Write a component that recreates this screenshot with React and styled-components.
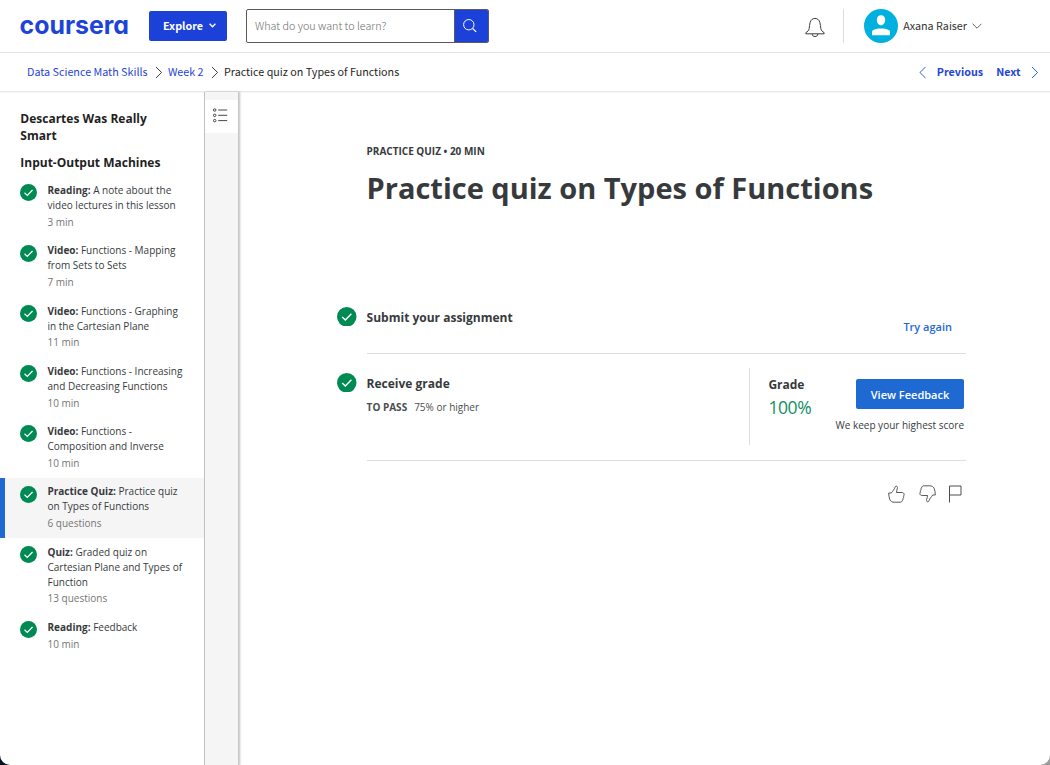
import React from "react";
import styled, { createGlobalStyle, css } from "styled-components";

const GlobalStyle = createGlobalStyle`
  * { box-sizing: border-box; }
  body {
    margin: 0;
    background: linear-gradient(90deg, #07111f 50%, #9b9b9b 50%);
    font-family: "Open Sans", sans-serif;
    color: #373a3c;
  }
`;

const sourceFont = css`
  font-family: "Noto Sans CJK SC", "Noto Sans", sans-serif;
`;

const Page = styled.div`
  height: 765px;
  display: flex;
  flex-direction: column;
  background: #fff;
  border-radius: 0 0 10px 10px;
  overflow: hidden;
`;

/* ---------- top bar ---------- */

const TopBar = styled.header`
  ${sourceFont}
  flex: none;
  height: 53px;
  display: flex;
  align-items: center;
  padding: 0 68px 0 20px;
  border-bottom: 1px solid #e3e3e3;
`;

const Logo = styled.svg`
  display: block;
  width: 109px;
  height: 30px;
  margin-right: 20px;
  overflow: visible;

  text {
    font: 700 25.5px Inter, sans-serif;
    font-feature-settings: "cv11";
    fill: #1d43d8;
  }
`;

const ExploreButton = styled.button`
  ${sourceFont}
  width: 78px;
  height: 30px;
  margin-right: 19px;
  padding: 0 0 1px 14px;
  display: flex;
  align-items: center;
  gap: 6px;
  border: 0;
  border-radius: 2px;
  background: #1b41d8;
  color: #fff;
  font-size: 10.75px;
  font-weight: 700;
`;

const SearchBox = styled.div`
  width: 243px;
  height: 34px;
  display: flex;
  border: 1px solid #5a5a5a;
  border-radius: 2px;
  overflow: hidden;
`;

const SearchField = styled.div`
  flex: 1;
  padding-left: 8px;
  line-height: 32px;
  font-size: 10.75px;
  font-weight: 300;
  color: #6c6c6c;
`;

const SearchButton = styled.button`
  width: 34px;
  padding: 0 1px 0 0;
  display: flex;
  align-items: center;
  justify-content: center;
  border: 0;
  border-left: 1px solid #5a5a5a;
  background: #1b41d8;
`;

const Account = styled.div`
  margin-left: auto;
  display: flex;
  align-items: center;
`;

const Divider = styled.span`
  width: 1px;
  height: 34px;
  margin: 0 20px 0 18px;
  background: #dcdcdc;
`;

const UserName = styled.span`
  margin: 0 5px;
  padding-bottom: 2px;
  font-size: 10.75px;
  color: #333;
`;

/* ---------- breadcrumbs ---------- */

const CrumbBar = styled.nav`
  ${sourceFont}
  flex: none;
  height: 39px;
  display: flex;
  align-items: center;
  padding: 0 12px 0 27px;
  border-bottom: 1px solid #e8e8e8;
  box-shadow: 0 1px 0 #f6f6f6;
  font-size: 10.75px;
  color: #1f1f1f;
`;

const Crumb = styled.span`
  padding-bottom: 2px;
`;

const CrumbLink = styled(Crumb)`
  color: #1f45d6;
`;

const CrumbArrow = styled.span`
  display: flex;
  margin: 0 5.7px 0 7.2px;
`;

const Pager = styled.div`
  margin-left: auto;
  display: flex;
  align-items: center;
  gap: 10px;
  color: #1f45d6;
  font-weight: 700;
`;

const PagerLabel = styled.a`
  padding-bottom: 2px;

  & + & {
    margin-left: 3px;
  }
`;

/* ---------- body ---------- */

const Body = styled.div`
  flex: 1;
  min-height: 0;
  display: flex;
`;

const Sidebar = styled.aside`
  width: 205px;
  padding-top: 18px;
  border-right: 1px solid #c4c4c4;
`;

const LessonTitle = styled.h3`
  margin: 0 40px 10px 20.3px;
  font-size: 12px;
  line-height: 17px;
  font-weight: 700;
  color: #1f1f1f;
`;

const ItemList = styled.ul`
  list-style: none;
  margin: -4px 0 0;
  padding: 0;
`;

const Item = styled.li`
  display: flex;
  padding: 6.15px 18px 7.35px ${(p) => (p.$active ? 15 : 20)}px;
  border-left: ${(p) => (p.$active ? "5px solid #1f6ad2" : "0")};
  background: ${(p) => (p.$active ? "#f5f5f5" : "transparent")};
`;

const ItemText = styled.div`
  margin-left: 10.5px;
  font-size: 10px;
  line-height: 15px;
  color: #373a3c;
`;

const ItemMeta = styled.div`
  margin-top: 1.75px;
  color: #757575;
`;

const ItemCheck = styled.span`
  flex: none;
  height: 17px;
  margin-top: 1.35px;
`;

const Rail = styled.div`
  width: 34px;
  padding-top: 8px;
  background: #f5f5f5;
  border-right: 1px solid #c8c8c8;
  box-shadow: 1px 0 2px rgba(0, 0, 0, 0.25);
`;

const RailTab = styled.div`
  height: 33px;
  display: flex;
  align-items: center;
  padding: 0 0 2px 8px;
  background: #fff;
`;

const Content = styled.main`
  width: 629px;
  margin-left: 98px;
  padding-top: 52px;
`;

const Indented = styled.div`
  margin-left: 29.5px;
`;

const Eyebrow = styled.div`
  font-size: 10px;
  line-height: 15px;
  font-weight: 700;
`;

const Title = styled.h1`
  margin: 9px 0 0;
  font-size: 29px;
  line-height: 40px;
  font-weight: 700;
`;

const Step = styled.section`
  display: flex;
  height: ${(p) => p.$height}px;
  margin-top: ${(p) => p.$top || 0}px;
`;

const StepCheck = styled.div`
  flex: none;
  width: 29.6px;
  padding-top: ${(p) => p.$top}px;
`;

const StepBody = styled.div`
  flex: 1;
  display: flex;
  justify-content: space-between;
  border-bottom: 1px solid #dedede;
`;

const StepInfo = styled.div`
  padding-top: ${(p) => p.$top}px;
`;

const Label = styled.div`
  font-size: 12px;
  line-height: 18px;
  font-weight: 700;
`;

const PassLine = styled.div`
  margin-top: 7px;
  font-size: 10px;
  line-height: 15px;
  color: #4a4d4f;

  b { margin-right: 7px; }
`;

const TryAgain = styled.a`
  margin: 19px 14px 0 0;
  font-size: 11px;
  line-height: 16px;
  font-weight: 600;
  color: #1f6ad2;
`;

const GradePanel = styled.div`
  width: 217px;
  height: 77px;
  margin-top: 14px;
  display: flex;
  justify-content: space-between;
  padding: 0 2px 0 18.4px;
  border-left: 1px solid #dedede;
`;

const Grade = styled.div`
  padding-top: 8px;
`;

const Score = styled.div`
  font-size: 17.5px;
  line-height: 26px;
  letter-spacing: -0.4px;
  font-weight: 400;
  color: #118f5f;
`;

const Feedback = styled.div`
  padding-top: 11px;
  display: flex;
  flex-direction: column;
  align-items: flex-end;
  font-size: 10px;
  line-height: 15px;
  white-space: nowrap;
`;

const FeedbackButton = styled.button`
  width: 108px;
  height: 30px;
  margin-bottom: 9px;
  padding: 1px 0 0;
  border: 0;
  border-radius: 2px;
  background: #1f6ad2;
  color: #fff;
  font: 600 11px "Open Sans", sans-serif;
`;

const Reactions = styled.div`
  display: flex;
  justify-content: flex-end;
  align-items: flex-start;
  gap: 13.5px;
  margin-top: 23.5px;
  padding-right: 4px;
`;

/* ---------- drawings ---------- */

const CheckBadge = ({ size }) => (
  <svg width={size} height={size} viewBox="0 0 18 18" display="block">
    <circle cx="9" cy="9" r="9" fill="#008a53" />
    <path d="M4.8 9.2l2.900 2.800 5.600-5.700" fill="none" stroke="#fff" strokeWidth="1.300" />
  </svg>
);

const Chevron = ({ left }) => (
  <svg width="7.5" height="13" viewBox="0 0 8 14" fill="none" stroke="currentColor">
    <path d={left ? "M7 1L1 7l6 6" : "M1 1l6 6-6 6"} strokeWidth="0.95" />
  </svg>
);

const ExploreCaret = () => (
  <svg width="7" height="5" viewBox="0 0 7 5" fill="none" stroke="#fff">
    <path d="M.6 .8l2.900 2.900L6.400 .8" strokeWidth="1.4" />
  </svg>
);

const SearchIcon = () => (
  <svg width="18" height="16" viewBox="0 0 18 16" fill="none" stroke="#fff">
    <circle cx="6.800" cy="6.700" r="5.200" strokeWidth="1" />
    <path d="M10.600 10.500l3.600 3.400" strokeWidth="1.2" />
  </svg>
);

const BellIcon = () => (
  <svg width="20" height="22" viewBox="0 0 20 22" fill="none" stroke="#30343a" strokeWidth="0.95">
    <path d="M.9 18.800v-1.200c1.800-.9 2.800-2 3.300-4.200.4-2 .3-4 .9-5.900C5.800 5 7.500 3.400 10 3.400S14.200 5 14.900 7.500c.6 1.900.5 3.900.9 5.900.5 2.200 1.500 3.300 3.300 4.200v1.200z" strokeLinejoin="round" />
    <path d="M7.200 19c0 1.600 1 2.500 2.800 2.500s2.800-.9 2.800-2.500" />
  </svg>
);

const Avatar = () => (
  <svg width="34" height="34" viewBox="0 0 34 34">
    <circle cx="17" cy="17" r="17" fill="#00b1df" />
    <path d="M17 6.200c2.600 0 4.200 1.900 4.200 4.500 0 3-1.700 5.500-4.200 5.500s-4.200-2.500-4.200-5.500c0-2.600 1.600-4.500 4.200-4.500z" fill="#fff" />
    <path d="M8 26.200V23c0-1 .5-1.600 1.500-2 2.200-.9 4.700-1.400 7.500-1.400s5.300.5 7.500 1.400c1 .4 1.500 1 1.500 2v3.200z" fill="#fff" />
  </svg>
);

const NameCaret = () => (
  <svg width="10" height="6" viewBox="0 0 10 6" fill="none" stroke="#555">
    <path d="M.6 .8L5 5.200 9.400 .8" strokeWidth="0.9" />
  </svg>
);

const OutlineIcon = () => (
  <svg width="15" height="15" viewBox="0 0 15 15" fill="none" stroke="#333">
    {[2, 7.3, 12.6].map((y) => (
      <g key={y}>
        <circle cx="1.700" cy={y} r="1.250" strokeWidth="0.9" />
        <path d={`M5.200 ${y}h9`} strokeWidth="0.9" />
      </g>
    ))}
  </svg>
);

const Thumb = ({ down }) => (
  <svg width="17" height="18" viewBox="0 0 17 18" fill="none" stroke="#373a3c" strokeWidth="0.85">
    <path
      transform={down ? "rotate(180 8.500 9)" : undefined}
      d="M.7 8h2.600C4.800 6 6.300 4.400 7 2.300c.3-.9.8-1.300 1.500-1.100.9.2 1.200 1 .9 2-.4 1.400-.8 2.700-.9 4.300h5.400c1.300 0 2.200.8 2.200 1.900 0 .7-.2 1.200-.6 1.600.3 1 .2 1.900-.5 2.500.1 1-.2 1.800-.9 2.300-.2 1-.9 1.400-2 1.400H6.200c-2 0-3.500-.8-4.300-2.400C1.100 12.600.7 10.500.7 8z"
      strokeLinejoin="round"
    />
  </svg>
);

const Flag = () => (
  <svg width="13" height="18" viewBox="0 0 13 18" fill="none" stroke="#373a3c" strokeWidth="0.9">
    <path d="M.5 17.500V1h11.500v9H.5" />
  </svg>
);

/* ---------- data ---------- */

const items = [
  { kind: "Reading", name: "A note about the video lectures in this lesson", meta: "3 min" },
  { kind: "Video", name: "Functions - Mapping from Sets to Sets", meta: "7 min" },
  { kind: "Video", name: "Functions - Graphing in the Cartesian Plane", meta: "11 min" },
  { kind: "Video", name: "Functions - Increasing and Decreasing Functions", meta: "10 min" },
  { kind: "Video", name: "Functions - Composition and Inverse", meta: "10 min" },
  { kind: "Practice Quiz", name: "Practice quiz on Types of Functions", meta: "6 questions", active: true },
  { kind: "Quiz", name: "Graded quiz on Cartesian Plane and Types of Function", meta: "13 questions" },
  { kind: "Reading", name: "Feedback", meta: "10 min" },
];

export default function App() {
  return (
    <>
      <GlobalStyle />
      <Page>
        <TopBar>
          <Logo viewBox="0 0 109 30">
            <text x="-0.5" y="23" textLength="109.5" lengthAdjust="spacingAndGlyphs">coursera</text>
          </Logo>
          <ExploreButton>Explore <ExploreCaret /></ExploreButton>
          <SearchBox>
            <SearchField>What do you want to learn?</SearchField>
            <SearchButton aria-label="Search"><SearchIcon /></SearchButton>
          </SearchBox>
          <Account>
            <BellIcon />
            <Divider />
            <Avatar />
            <UserName>Axana Raiser</UserName>
            <NameCaret />
          </Account>
        </TopBar>

        <CrumbBar>
          <CrumbLink as="a">Data Science Math Skills</CrumbLink>
          <CrumbArrow><Chevron /></CrumbArrow>
          <CrumbLink as="a">Week 2</CrumbLink>
          <CrumbArrow><Chevron /></CrumbArrow>
          <Crumb>Practice quiz on Types of Functions</Crumb>
          <Pager>
            <Chevron left />
            <PagerLabel>Previous</PagerLabel>
            <PagerLabel>Next</PagerLabel>
            <Chevron />
          </Pager>
        </CrumbBar>

        <Body>
          <Sidebar>
            <LessonTitle>Descartes Was Really Smart</LessonTitle>
            <LessonTitle>Input-Output Machines</LessonTitle>
            <ItemList>
              {items.map((item) => (
                <Item key={item.name} $active={item.active}>
                  <ItemCheck><CheckBadge size={17} /></ItemCheck>
                  <ItemText>
                    <b>{item.kind}:</b> {item.name}
                    <ItemMeta>{item.meta}</ItemMeta>
                  </ItemText>
                </Item>
              ))}
            </ItemList>
          </Sidebar>
          <Rail>
            <RailTab><OutlineIcon /></RailTab>
          </Rail>

          <Content>
            <Indented>
              <Eyebrow>PRACTICE QUIZ • 20 MIN</Eyebrow>
              <Title>Practice quiz on Types of Functions</Title>
            </Indented>
            <Step $height={54} $top={92}>
              <StepCheck $top={6.7}><CheckBadge size={19.5} /></StepCheck>
              <StepBody>
                <StepInfo $top={9}><Label>Submit your assignment</Label></StepInfo>
                <TryAgain>Try again</TryAgain>
              </StepBody>
            </Step>
            <Step $height={107}>
              <StepCheck $top={18.7}><CheckBadge size={19.5} /></StepCheck>
              <StepBody>
                <StepInfo $top={21}>
                  <Label>Receive grade</Label>
                  <PassLine><b>TO PASS</b>75% or higher</PassLine>
                </StepInfo>
                <GradePanel>
                  <Grade>
                    <Label>Grade</Label>
                    <Score>100%</Score>
                  </Grade>
                  <Feedback>
                    <FeedbackButton>View Feedback</FeedbackButton>
                    We keep your highest score
                  </Feedback>
                </GradePanel>
              </StepBody>
            </Step>
            <Reactions>
              <Thumb />
              <Thumb down />
              <Flag />
            </Reactions>
          </Content>
        </Body>
      </Page>
    </>
  );
}
